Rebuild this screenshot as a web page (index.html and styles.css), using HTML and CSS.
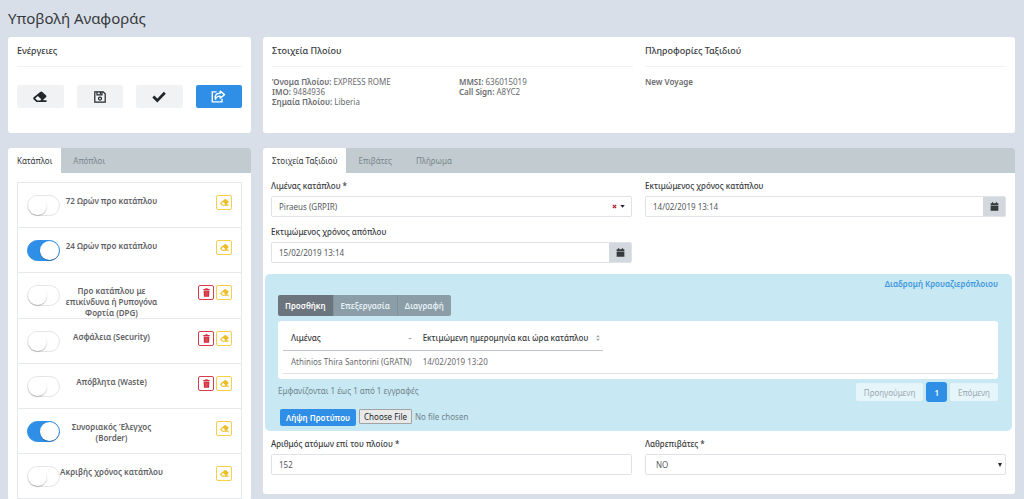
FILE: index.html
```html
<!DOCTYPE html>
<html lang="el">
<head>
<meta charset="utf-8">
<meta name="viewport" content="width=device-width, initial-scale=1">
<title>Υποβολή Αναφοράς</title>
<link rel="stylesheet" href="styles.css">
</head>
<body>
<svg class="sprite" aria-hidden="true">
  <symbol id="i-eraser" viewBox="0 0 14 12"><path fill="currentColor" fill-rule="evenodd" d="M7.200.9a1.500 1.500 0 0 1 2.100 0l3.600 3.300a1.500 1.500 0 0 1 0 2.100L9.800 9.300H13.500V11H3.500L.7 8.400a1.500 1.500 0 0 1 0-2.100zM4.800 5.100 2.200 7.400l2.100 2h2.900L8.300 8.300z"/></symbol>
  <symbol id="i-trash" viewBox="0 0 12 14"><path fill="currentColor" d="M1 1.500h3L4.500.5h3L8 1.500h3V3.300H1zM1.500 4h9L10 13.500H2z"/><path stroke="#fff" stroke-opacity=".35" stroke-width=".6" d="M4.300 5.500v6.500M6 5.500v6.500M7.700 5.500v6.500"/></symbol>
  <symbol id="i-calendar" viewBox="0 0 14 14"><path fill="currentColor" d="M3 .5h2V2h4V.5h2V2h2v2.500H1V2h2zM1 5.300h12V13.500H1z"/></symbol>
</svg>
<main class="page">
  <h1 class="page-title">Υποβολή Αναφοράς</h1>
  <div class="layout">
    <section class="card actions">
      <h2 class="card-title">Ενέργειες</h2>
      <div class="action-row">
        <button type="button" class="action" aria-label="Καθαρισμός"><svg class="icon-wide"><use href="#i-eraser"/></svg></button>
        <button type="button" class="action" aria-label="Αποθήκευση"><svg class="icon" viewBox="0 0 12 12" fill="none" stroke="currentColor" stroke-width="1.200"><path d="M.8.8h8.400l2 2v8.400H.8zM3 1v2.800h5V1M6.400 1v2"/><circle cx="6" cy="7.600" r="1.500"/></svg></button>
        <button type="button" class="action" aria-label="Έλεγχος"><svg class="icon-wide" viewBox="0 0 14 12" fill="none" stroke="currentColor" stroke-width="2.800"><path d="m1.300 5.600 4 4L12.800 1.800"/></svg></button>
        <button type="button" class="action action-primary" aria-label="Υποβολή"><svg class="icon-share" viewBox="0 0 16 14" fill="none" stroke="currentColor" stroke-width="1.500"><path d="M6 2H1.300v10.800h10.500V9.500"/><path stroke-linejoin="round" d="M9.800 1.200 14.500 5 9.800 8.800V6.600C7 6.500 5.500 7.400 4.800 10 3.500 6.500 5.200 3.400 9.800 3.400z"/></svg></button>
      </div>
    </section>

    <section class="card ship">
      <div class="ship-details">
        <h2 class="card-title">Στοιχεία Πλοίου</h2>
        <div class="facts">
          <div><b>Όνομα Πλοίου:</b> EXPRESS ROME<br><b>IMO:</b> 9484936<br><b>Σημαία Πλοίου:</b> Liberia</div>
          <div><b>MMSI:</b> 636015019<br><b>Call Sign:</b> A8YC2</div>
        </div>
      </div>
      <div class="voyage-details">
        <h2 class="card-title">Πληροφορίες Ταξιδιού</h2>
        <div class="facts"><b>New Voyage</b></div>
      </div>
    </section>

    <section class="card tabbed">
      <nav class="tabs">
        <button type="button" class="tab tab-active">Κατάπλοι</button>
        <button type="button" class="tab">Απόπλοι</button>
      </nav>
      <ul class="reports">
        <li class="report"><input class="switch" type="checkbox" id="r1"><label for="r1">72 Ωρών προ κατάπλου</label><span class="tools"><button type="button" class="tool" aria-label="Καθαρισμός"><svg><use href="#i-eraser"/></svg></button></span></li>
        <li class="report"><input class="switch" type="checkbox" id="r2" checked><label for="r2">24 Ωρών προ κατάπλου</label><span class="tools"><button type="button" class="tool" aria-label="Καθαρισμός"><svg><use href="#i-eraser"/></svg></button></span></li>
        <li class="report"><input class="switch" type="checkbox" id="r3"><label for="r3">Προ κατάπλου με επικίνδυνα ή Ρυπογόνα Φορτία (DPG)</label><span class="tools"><button type="button" class="tool tool-delete" aria-label="Διαγραφή"><svg><use href="#i-trash"/></svg></button><button type="button" class="tool" aria-label="Καθαρισμός"><svg><use href="#i-eraser"/></svg></button></span></li>
        <li class="report"><input class="switch" type="checkbox" id="r4"><label for="r4">Ασφάλεια (Security)</label><span class="tools"><button type="button" class="tool tool-delete" aria-label="Διαγραφή"><svg><use href="#i-trash"/></svg></button><button type="button" class="tool" aria-label="Καθαρισμός"><svg><use href="#i-eraser"/></svg></button></span></li>
        <li class="report"><input class="switch" type="checkbox" id="r5"><label for="r5">Απόβλητα (Waste)</label><span class="tools"><button type="button" class="tool tool-delete" aria-label="Διαγραφή"><svg><use href="#i-trash"/></svg></button><button type="button" class="tool" aria-label="Καθαρισμός"><svg><use href="#i-eraser"/></svg></button></span></li>
        <li class="report"><input class="switch" type="checkbox" id="r6" checked><label for="r6">Συνοριακός Έλεγχος (Border)</label><span class="tools"><button type="button" class="tool" aria-label="Καθαρισμός"><svg><use href="#i-eraser"/></svg></button></span></li>
        <li class="report"><input class="switch" type="checkbox" id="r7"><label for="r7">Ακριβής χρόνος κατάπλου</label><span class="tools"><button type="button" class="tool" aria-label="Καθαρισμός"><svg><use href="#i-eraser"/></svg></button></span></li>
      </ul>
    </section>

    <section class="card tabbed">
      <nav class="tabs">
        <button type="button" class="tab tab-active">Στοιχεία Ταξιδιού</button>
        <button type="button" class="tab">Επιβάτες</button>
        <button type="button" class="tab">Πλήρωμα</button>
      </nav>
      <form class="voyage-form">
        <div class="field">
          <label for="port">Λιμένας κατάπλου *</label>
          <div class="control">
            <select id="port" class="input"><option>Piraeus (GRPIR)</option></select>
            <button type="button" class="clear" aria-label="Καθαρισμός"><svg viewBox="0 0 6 6" stroke="currentColor" stroke-width="1.500"><path d="m1 1 4 4M5 1 1 5"/></svg></button>
            <svg class="caret" viewBox="0 0 6 4"><path d="M0 0h6L3 3.500z"/></svg>
          </div>
        </div>
        <div class="field">
          <label for="eta">Εκτιμώμενος χρόνος κατάπλου</label>
          <div class="control">
            <input id="eta" class="input" type="text" value="14/02/2019 13:14">
            <button type="button" class="picker" aria-label="Ημερολόγιο"><svg><use href="#i-calendar"/></svg></button>
          </div>
        </div>
        <div class="field">
          <label for="etd">Εκτιμώμενος χρόνος απόπλου</label>
          <div class="control">
            <input id="etd" class="input" type="text" value="15/02/2019 13:14">
            <button type="button" class="picker" aria-label="Ημερολόγιο"><svg><use href="#i-calendar"/></svg></button>
          </div>
        </div>

        <section class="cruise">
          <h3 class="cruise-title">Διαδρομή Κρουαζιερόπλοιου</h3>
          <div class="button-group">
            <button type="button" class="enabled">Προσθήκη</button><button type="button">Επεξεργασία</button><button type="button">Διαγραφή</button>
          </div>
          <div class="table-box">
            <div class="table-scroll">
              <table class="ports">
                <thead><tr>
                  <th><span>Λιμένας <svg class="sort" viewBox="0 0 5 8"><path d="M0 4h5L2.500 6z"/></svg></span></th>
                  <th><span>Εκτιμώμενη ημερομηνία και ώρα κατάπλου <svg class="sort" viewBox="0 0 5 8"><path d="M0 3h5L2.500 0zM0 5h5L2.500 8z"/></svg></span></th>
                </tr></thead>
                <tbody><tr><td>Athinios Thira Santorini (GRATN)</td><td>14/02/2019 13:20</td></tr></tbody>
              </table>
            </div>
          </div>
          <div class="table-foot">
            <p>Εμφανίζονται 1 έως 1 από 1 εγγραφές</p>
            <nav class="pager">
              <button type="button">Προηγούμενη</button>
              <button type="button" class="current">1</button>
              <button type="button">Επόμενη</button>
            </nav>
          </div>
          <div class="upload">
            <button type="button" class="download">Λήψη Προτύπου</button>
            <input type="file" class="file" aria-label="Αρχείο">
          </div>
        </section>

        <div class="field">
          <label for="persons">Αριθμός ατόμων επί του πλοίου *</label>
          <div class="control"><input id="persons" class="input" type="text" value="152"></div>
        </div>
        <div class="field">
          <label for="stowaways">Λαθρεπιβάτες *</label>
          <div class="control">
            <select id="stowaways" class="input input-indent"><option>NO</option></select>
            <svg class="caret caret-edge" viewBox="0 0 6 6"><path d="M0 0h6L3 6z"/></svg>
          </div>
        </div>
      </form>
    </section>
  </div>
</main>
</body>
</html>
```

FILE: styles.css
```css
* { box-sizing: border-box; }

body {
  margin: 0;
  background: #d9dfe8;
  color: #6a6c6f;
  font: 8px/11px "Noto Sans", "Open Sans", sans-serif;
}

h1, h2, h3, p, ul { margin: 0; padding: 0; }
b { font-weight: 600; }
button, input, select { font: inherit; color: inherit; }
button { padding: 0; border: 0; cursor: pointer; }
.sprite { display: none; }

.page { padding: 7px 9px 0 8px; }
.page-title { margin-bottom: 8px; color: #373a3c; font-size: 15px; font-weight: 400; line-height: 22px; }

.layout {
  display: grid;
  grid-template-columns: 243fr 752fr;
  gap: 15px 12px;
  align-items: start;
}

.card { min-width: 0; background: #fff; border-radius: 3px; }
.card-title {
  padding-bottom: 9px;
  border-bottom: 1px solid #f0f2f4;
  color: #373a3c;
  font-size: 9px;
  font-weight: 500;
  line-height: 12px;
}

.actions { padding: 8px 9px 25px; }
.action-row { display: grid; grid-template-columns: repeat(4, 1fr); gap: 13px; padding-top: 18px; }
.action {
  display: flex;
  align-items: center;
  justify-content: center;
  height: 23px;
  border-radius: 2px;
  background: #f0f2f4;
  color: #22262a;
}
.action-primary { background: #2f8ee5; color: #fff; }
.icon { width: 12px; height: 12px; }
.icon-wide { width: 14px; height: 12px; }
.icon-share { width: 15px; height: 13px; }

.ship { display: grid; grid-template-columns: 1fr 1fr; gap: 12px; align-self: stretch; padding: 8px 9px; }
.facts { display: grid; grid-template-columns: 1fr 1fr; gap: 13px; padding-top: 10px; line-height: 10px; }

.tabs { display: flex; height: 25px; border-radius: 3px 3px 0 0; background: #c1cbd0; overflow: hidden; }
.tab { padding: 0 12px; background: none; color: #7b868c; }
.tab-active { padding: 0 9px; background: #fff; color: #373a3c; }

.reports { margin: 9px 9px 0; border: 1px solid #e6e9ec; list-style: none; }
.report {
  display: grid;
  grid-template-columns: 33px 103px 1fr;
  align-items: start;
  min-height: 45px;
  padding: 12px 9px 0;
  border-bottom: 1px solid #e6e9ec;
}
.report label { color: #5f6265; font-weight: 600; text-align: center; }
.switch {
  appearance: none;
  width: 33px;
  height: 21px;
  margin: 0;
  border: 1px solid #e4e4e4;
  border-radius: 11px;
  background: #fff;
  cursor: pointer;
}
.switch::before {
  content: "";
  display: block;
  width: 19px;
  height: 19px;
  border-radius: 50%;
  background: #fff;
  box-shadow: 0 1px 1px rgba(0, 0, 0, .25);
}
.switch:checked { border-color: #2f8ee5; background: #2f8ee5; }
.switch:checked::before { margin-left: auto; }
.tools { display: flex; justify-content: flex-end; gap: 2px; }
.tool {
  display: flex;
  align-items: center;
  justify-content: center;
  width: 16px;
  height: 15px;
  border: 1px solid #f8cf4a;
  border-radius: 2px;
  background: #fff;
  color: #edbd25;
}
.tool svg { width: 9px; height: 9px; }
.tool-delete { border-color: #d83b4a; color: #d52d3d; }

.voyage-form { display: grid; grid-template-columns: 1fr 1fr; gap: 9px 13px; padding: 7px 9px 19px 8px; }
.field label { display: block; margin-bottom: 5px; color: #373a3c; font-weight: 500; }
.control {
  display: flex;
  align-items: center;
  height: 21px;
  border: 1px solid #dfe3e7;
  border-radius: 2px;
  overflow: hidden;
}
.input {
  appearance: none;
  flex: 1;
  min-width: 0;
  height: 19px;
  padding: 0 7px;
  border: 0;
  background: #fff;
  color: #55595c;
}
.input-indent { padding-left: 10px; }
.clear { display: flex; margin-right: 3px; background: none; color: #b3262a; }
.clear svg { width: 5px; height: 5px; }
.caret { width: 5px; height: 3px; margin-right: 6px; fill: #22262a; }
.caret-edge { width: 4px; height: 4px; margin-right: 3px; }
.picker {
  display: flex;
  align-items: center;
  justify-content: center;
  align-self: stretch;
  width: 22px;
  background: #d3d8df;
  color: #373a3c;
}
.picker svg { width: 9px; height: 9px; }

.cruise {
  grid-column: 1 / -1;
  margin: 2px -6px -2px;
  padding: 4px 14px 5px 13px;
  border-radius: 5px;
  background: #c8e8f3;
}
.cruise-title { color: #3f97dc; font-size: 8px; font-weight: 600; line-height: 11px; text-align: right; }
.button-group { display: inline-flex; margin: 6px 0 5px; border-radius: 2px; overflow: hidden; vertical-align: top; }
.button-group button { height: 21px; padding: 0 7px; background: #8b9ea8; color: #e6f0f4; font-weight: 600; }
.button-group button + button { border-left: 1px solid #80929c; }
.button-group .enabled { background: #6c757d; color: #fff; }

.table-box { padding: 5px; border-radius: 3px; background: #fff; }
.table-scroll { border-bottom: 1px solid #dfe3e7; }
.ports { border-collapse: collapse; }
.ports th, .ports td { height: 24px; padding: 0 3px 0 8px; text-align: left; }
.ports td { height: 23px; }
.ports th { border-bottom: 1px solid #bfc4c9; color: #373a3c; font-weight: 500; }
.ports th span { display: flex; align-items: center; justify-content: space-between; gap: 8px; }
.sort { width: 4px; height: 6px; fill: #9da3a8; }

.table-foot { display: flex; justify-content: space-between; padding: 3px 0 7px; }
.table-foot p { padding-top: 3px; color: #70848c; }
.pager { display: flex; align-items: center; gap: 3px; }
.pager button { height: 18px; padding: 0 8px; border-radius: 2px; background: #e6f5fa; color: #9aa8af; }
.pager .current { height: 20px; border-radius: 3px; background: #2f8ee5; color: #fff; font-weight: 600; }

.upload { display: flex; align-items: flex-start; gap: 3px; padding-left: 2px; }
.download { height: 17px; padding: 0 6px; border-radius: 2px; background: #2f8ee5; color: #fff; font-weight: 600; }
.file { color: #70848c; }
.file::file-selector-button {
  height: 15px;
  margin: 0 3px 0 0;
  padding: 0 4px;
  border: 1px solid #a3a3a3;
  border-radius: 1px;
  background: #e9e9e9;
  color: #22262a;
  font: inherit;
}
```
